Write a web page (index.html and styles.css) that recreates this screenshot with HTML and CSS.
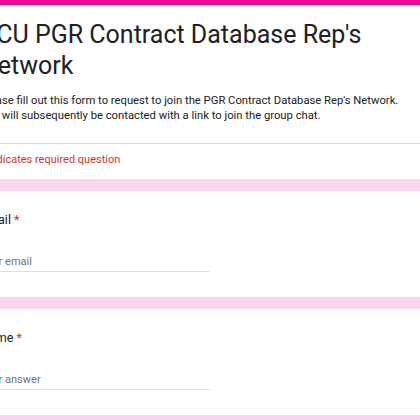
FILE: index.html
```html
<!DOCTYPE html>
<html lang="en">
<head>
<meta charset="utf-8">
<title>UCU PGR Contract Database Rep's Network</title>
<link rel="stylesheet" href="styles.css">
</head>
<body>
<main class="page">
  <section class="card header-card">
    <div class="header-main">
      <h1 class="title">UCU PGR Contract Database Rep's Network</h1>
      <p class="desc">Please fill out this form to request to join the PGR Contract Database Rep's Network.<br>You will subsequently be contacted with a link to join the group chat.</p>
    </div>
    <div class="required-note">* Indicates required question</div>
  </section>
  <section class="card question">
    <div class="q-label">Email <span class="star">*</span></div>
    <div class="q-input">Your email</div>
  </section>
  <section class="card question">
    <div class="q-label">Name <span class="star">*</span></div>
    <div class="q-input">Your answer</div>
  </section>
  <section class="card question"></section>
</main>
</body>
</html>
```
FILE: styles.css
```css
html, body {
  margin: 0;
  padding: 0;
}
body {
  background: #f9d8ee;
  width: 420px;
  height: 420px;
  overflow: hidden;
  font-family: Roboto, "Liberation Sans", Arial, sans-serif;
  color: #202124;
}
.page {
  margin-left: -40px;
  width: 640px;
  display: flex;
  flex-direction: column;
  gap: 12px;
}
.card {
  background: #ffffff;
  padding-left: 20px;
}
.header-card {
  border-top: 5px solid #ea0a8e;
  padding-left: 0;
}
.header-main {
  padding: 14px 0 20px 20px;
  border-bottom: 1px solid #dadce0;
}
.title {
  margin: 0;
  max-width: 420px;
  font-family: Roboto, "Liberation Sans", sans-serif;
  font-weight: 400;
  font-size: 25px;
  line-height: 31px;
  color: #202124;
}
.desc {
  margin: 12px 0 0 0;
  font-size: 11.25px;
  line-height: 15px;
  color: #202124;
}
.required-note {
  padding: 8px 0 12px 20px;
  font-size: 11px;
  line-height: 15px;
  color: #d93025;
}
.question {
  padding-top: 19px;
  padding-bottom: 23px;
  height: 64px;
}
.q-label {
  font-size: 12.5px;
  line-height: 19px;
  color: #202124;
}
.star {
  color: #d93025;
}
.q-input {
  margin-top: 25px;
  width: 230px;
  font-size: 11px;
  line-height: 15px;
  color: #70757a;
  padding-bottom: 2px;
  border-bottom: 1px solid #e0e0e0;
}
```
